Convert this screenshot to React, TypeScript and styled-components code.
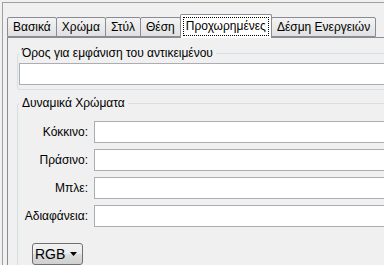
import React from 'react';
import styled, { createGlobalStyle } from 'styled-components';

const GlobalStyle = createGlobalStyle`
  html, body {
    margin: 0;
    padding: 0;
    background: #ffffff;
    overflow: hidden;
  }
  body {
    font-family: "Liberation Sans", Arial, sans-serif;
    font-size: 12px;
    color: #000;
  }
`;

const Page = styled.div`
  width: 430px;
  height: 265px;
  box-sizing: border-box;
  padding: 2px 0 0 2px;
  background: #f0f0f0;
`;

const Frame = styled.div`
  height: 100%;
  box-sizing: border-box;
  border-top: 1px solid #a0a0a0;
  border-left: 1px solid #a0a0a0;
  padding: 11px 0 0 4px;
  display: flex;
  flex-direction: column;
`;

const TabStrip = styled.div`
  display: flex;
  align-items: flex-end;
  height: 23px;
  position: relative;
  z-index: 1;
`;

const Tab = styled.div<{ $active?: boolean }>`
  box-sizing: border-box;
  height: ${(p) => (p.$active ? '24px' : '20px')};
  margin-bottom: ${(p) => (p.$active ? '-1px' : '0')};
  padding: ${(p) => (p.$active ? '2px 2px 0' : '0 5px 1px')};
  display: flex;
  align-items: ${(p) => (p.$active ? 'flex-start' : 'center')};
  border: 1px solid #898c95;
  border-bottom: ${(p) => (p.$active ? 'none' : '1px solid #898c95')};
  border-radius: 2px 2px 0 0;
  margin-right: -1px;
  background: ${(p) => (p.$active ? '#ffffff' : 'linear-gradient(#f3f3f3, #e1e1e1)')};
  white-space: nowrap;
  position: relative;
  z-index: ${(p) => (p.$active ? 2 : 1)};
`;

const FocusLabel = styled.span`
  display: block;
  border: 1px dotted #000;
  padding: 1px 2px 2px;
  line-height: 14px;
`;

const Panel = styled.div`
  flex: 1;
  border: 1px solid #898c95;
  border-bottom: none;
  border-right: none;
  background: #f0f0f0;
  padding: 8px 0 0 9px;
  display: flex;
  flex-direction: column;
  gap: 6px;
`;

const Group = styled.fieldset`
  margin: 0;
  border: 1px solid #d5dfe5;
  border-radius: 3px;
  padding: 3px 0 4px 1px;
  min-width: 0;
`;

const GroupOpen = styled(Group)`
  flex: 1;
  border-bottom: none;
  border-radius: 3px 3px 0 0;
  padding: 11px 0 0 1px;
`;

const Legend = styled.legend`
  padding: 0 3px;
  line-height: 14px;
  margin-left: 0;
`;

const TextBox = styled.div`
  box-sizing: border-box;
  height: 22px;
  background: #ffffff;
  border: 1px solid #abadb3;
  border-right: none;
`;

const FieldGrid = styled.div`
  display: grid;
  grid-template-columns: 69px 1fr;
  column-gap: 6px;
  row-gap: 6px;
  align-items: center;
`;

const FieldLabel = styled.label`
  text-align: right;
  white-space: nowrap;
`;

const ComboButton = styled.div`
  box-sizing: border-box;
  margin: 16px 0 0 13px;
  width: 51px;
  height: 22px;
  display: flex;
  align-items: center;
  justify-content: space-between;
  padding: 0 5px 0 2px;
  border: 1px solid #707070;
  border-radius: 3px;
  background: linear-gradient(#f2f2f2 0%, #ebebeb 50%, #dddddd 51%, #cfcfcf 100%);
  font-size: 14px;
`;

const tabs = ['Βασικά', 'Χρώμα', 'Στύλ', 'Θέση', 'Προχωρημένες', 'Δέσμη Ενεργειών'];
const activeTab = 'Προχωρημένες';
const colorFields = ['Κόκκινο:', 'Πράσινο:', 'Μπλε:', 'Αδιαφάνεια:'];

export default function App() {
  return (
    <>
      <GlobalStyle />
      <Page>
        <Frame>
          <TabStrip>
            {tabs.map((t) =>
              t === activeTab ? (
                <Tab key={t} $active>
                  <FocusLabel>{t}</FocusLabel>
                </Tab>
              ) : (
                <Tab key={t}>{t}</Tab>
              )
            )}
          </TabStrip>
          <Panel>
            <Group>
              <Legend>Όρος για εμφάνιση του αντικειμένου</Legend>
              <TextBox />
            </Group>
            <GroupOpen>
              <Legend>Δυναμικά Χρώματα</Legend>
              <FieldGrid>
                {colorFields.map((f) => (
                  <React.Fragment key={f}>
                    <FieldLabel>{f}</FieldLabel>
                    <TextBox />
                  </React.Fragment>
                ))}
              </FieldGrid>
              <ComboButton>
                RGB
                <svg width="7" height="4" viewBox="0 0 7 4">
                  <path d="M0 0h7L3.5 4z" fill="#000" />
                </svg>
              </ComboButton>
            </GroupOpen>
          </Panel>
        </Frame>
      </Page>
    </>
  );
}
